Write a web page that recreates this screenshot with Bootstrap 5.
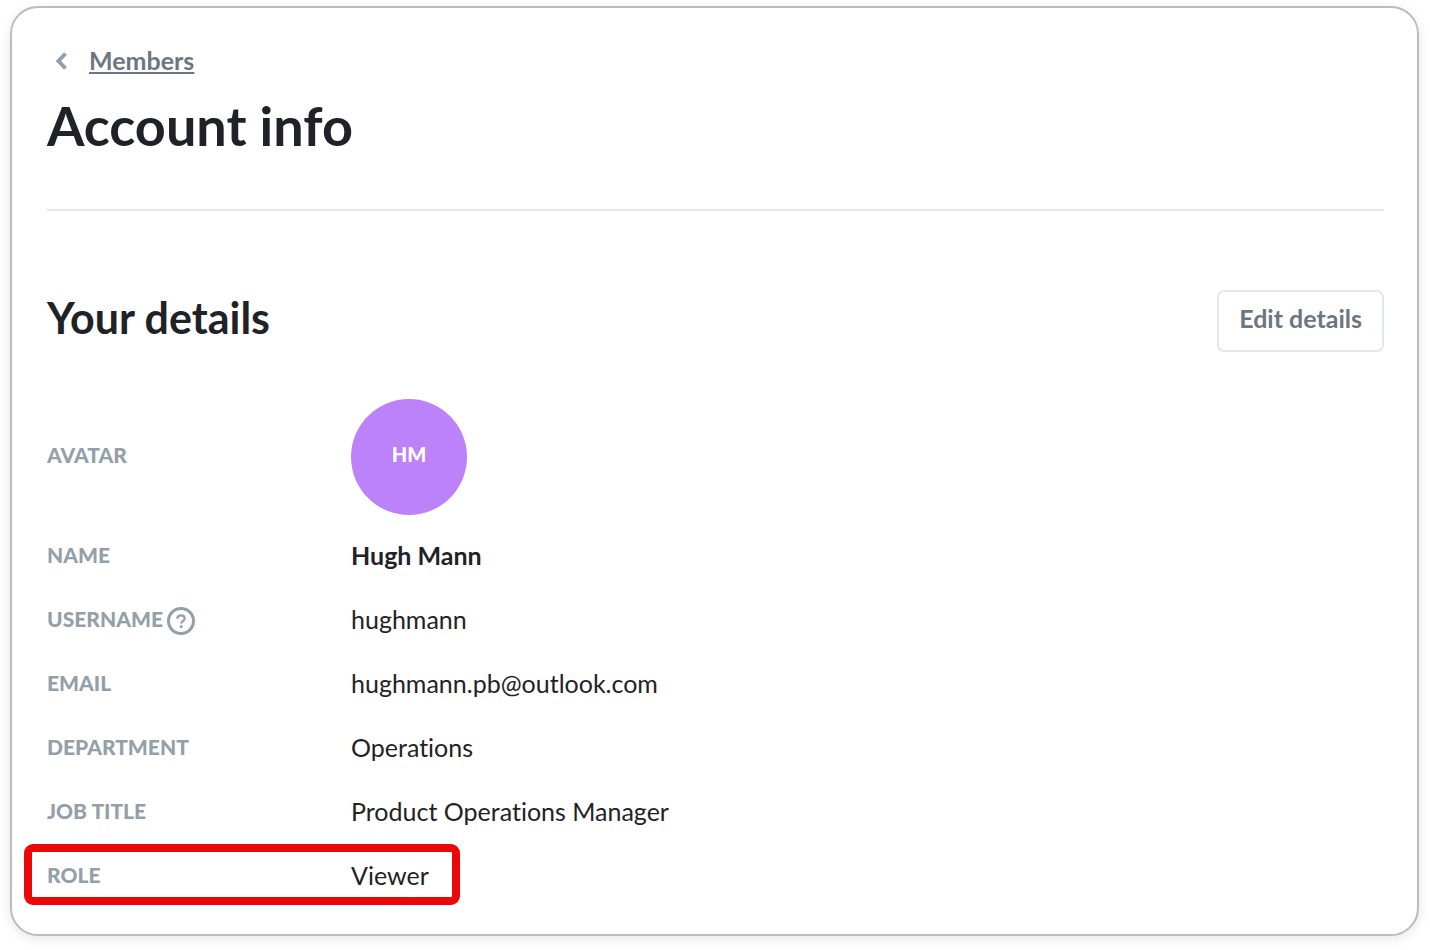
<!DOCTYPE html>
<html lang="en">
<head>
<meta charset="utf-8">
<meta name="viewport" content="width=device-width, initial-scale=1">
<title>Account info</title>
<link href="https://cdn.jsdelivr.net/npm/bootstrap@5.3.0/dist/css/bootstrap.min.css" rel="stylesheet">
<style>
  body { font-family: Lato, "Open Sans", sans-serif; font-size: 25px; line-height: 32px; color: #1f2327; font-variant-ligatures: no-common-ligatures; background: #fff; }
  .account-panel { margin: 6px 11px 14px 10px; padding: 36px 33px 29px 35px; border: 2px solid #bcbcbc; border-radius: 28px; box-shadow: 0 3px 12px rgba(0, 0, 0, .1); }
  .back-link { color: #6b7682; text-decoration-thickness: 2px; text-underline-offset: 2px; text-decoration-skip-ink: none; }
  .back-arrow { width: 12px; height: 22px; margin: 0 22px 0 8px; }
  .page-title { font-size: 54px; line-height: 64px; margin: 18px 0 51px; }
  .divider { border-top: 2px solid #e4e8eb; margin-bottom: 79px; }
  .section-title { font-size: 43px; line-height: 56px; }
  .btn-edit { --bs-btn-color: #6b7682; --bs-btn-border-color: #e4e8eb; --bs-btn-hover-border-color: #c9d0d6; --bs-btn-border-width: 2px; --bs-btn-border-radius: 7px; font-size: 25px; line-height: 30px; padding: 11px 20px 17px; }
  .detail-row { min-height: 64px; }
  .detail-key { width: 304px; flex: none; font-size: 21px; font-weight: 900; line-height: 32px; color: #939fa9; }
  .avatar-row { margin: 47px 0 8px; }
  .avatar { width: 116px; height: 116px; padding-bottom: 6px; font-size: 20px; font-weight: 900; background: #bb82f9; }
  .help-btn { line-height: 0; color: #939fa9; }
  .role-row { width: 436px; min-height: 61px; margin: 1px 0 0 -23px; padding-left: 15px; border: 8px solid #ea0808; border-radius: 9px; }
</style>
</head>
<body>
<main class="account-panel">
  <nav class="d-flex align-items-center" aria-label="Breadcrumb">
    <svg class="back-arrow" viewBox="0 0 12 22" fill="none" stroke="#939fa9" stroke-width="4" aria-hidden="true"><path d="M10.500 4.500 3.500 12l7 7.500"/></svg>
    <a href="#" class="back-link fw-bold">Members</a>
  </nav>
  <h1 class="page-title fw-bold">Account info</h1>
  <div class="divider"></div>

  <section>
    <div class="d-flex justify-content-between align-items-start">
      <h2 class="section-title fw-bold mb-0">Your details</h2>
      <button type="button" class="btn btn-edit fw-bold">Edit details</button>
    </div>

    <dl class="mb-0">
      <div class="avatar-row d-flex align-items-center">
        <dt class="detail-key pb-1">AVATAR</dt>
        <dd class="avatar rounded-circle d-flex align-items-center justify-content-center text-white mb-0">HM</dd>
      </div>
      <div class="detail-row d-flex align-items-center">
        <dt class="detail-key">NAME</dt>
        <dd class="fw-bold mb-0">Hugh Mann</dd>
      </div>
      <div class="detail-row d-flex align-items-center">
        <dt class="detail-key d-flex align-items-center">USERNAME
          <button type="button" class="help-btn btn border-0 p-0 ms-1" aria-label="About usernames">
            <svg width="28" height="32" viewBox="1 0 28 32" fill="none" stroke="currentColor" aria-hidden="true"><circle cx="15" cy="18" r="12.500" stroke-width="3"/><path d="M11.300 15.800c0-2.200 1.500-3.500 3.700-3.500s3.700 1.300 3.700 3.100c0 2.500-3.500 2.400-3.500 5.200" stroke-width="2.300"/><circle cx="15.200" cy="23.500" r="1.500" fill="currentColor" stroke="none"/></svg>
          </button>
        </dt>
        <dd class="mb-0">hughmann</dd>
      </div>
      <div class="detail-row d-flex align-items-center">
        <dt class="detail-key">EMAIL</dt>
        <dd class="mb-0">hughmann.pb@outlook.com</dd>
      </div>
      <div class="detail-row d-flex align-items-center">
        <dt class="detail-key">DEPARTMENT</dt>
        <dd class="mb-0">Operations</dd>
      </div>
      <div class="detail-row d-flex align-items-center">
        <dt class="detail-key">JOB TITLE</dt>
        <dd class="mb-0">Product Operations Manager</dd>
      </div>
      <div class="role-row d-flex align-items-center">
        <dt class="detail-key">ROLE</dt>
        <dd class="mb-0">Viewer</dd>
      </div>
    </dl>
  </section>
</main>
<script src="https://cdn.jsdelivr.net/npm/bootstrap@5.3.0/dist/js/bootstrap.bundle.min.js"></script>
</body>
</html>
